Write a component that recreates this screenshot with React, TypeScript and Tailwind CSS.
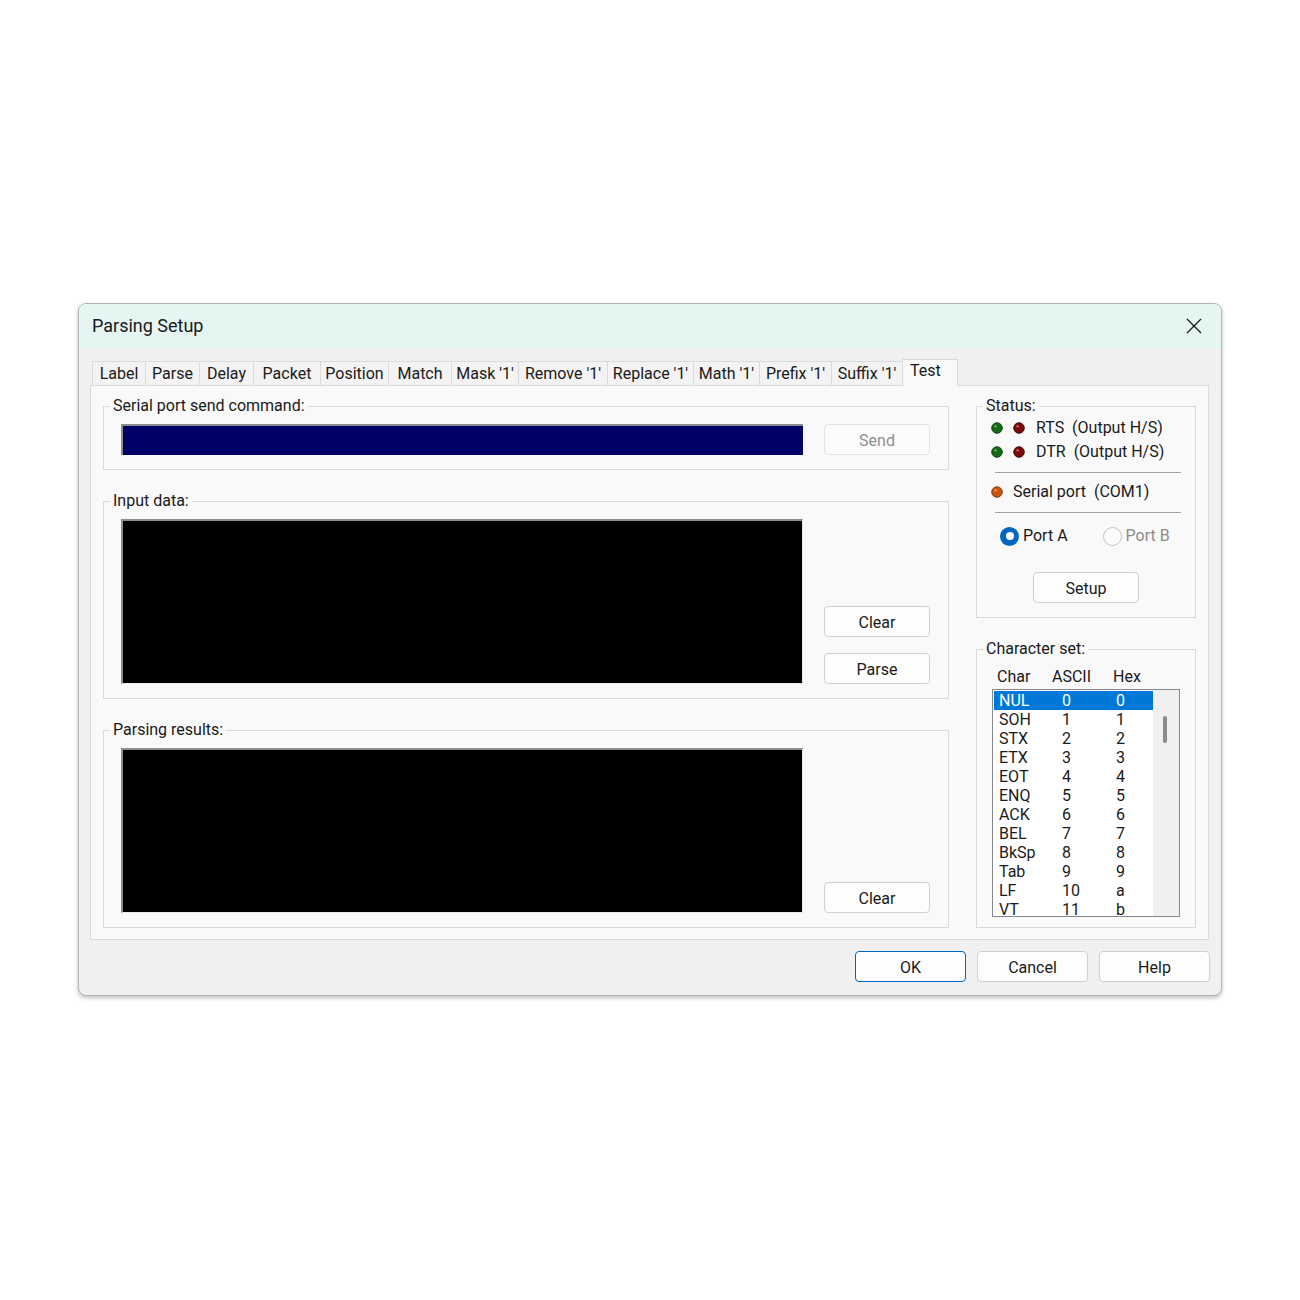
import React from 'react';

const font = { fontFamily: 'Roboto, "Noto Sans", "Liberation Sans", sans-serif' };

const tabs: [string, string][] = [
  ['Label', 'w-[53px]'],
  ['Parse', 'w-[54px]'],
  ['Delay', 'w-[54px]'],
  ['Packet', 'w-[67px]'],
  ['Position', 'w-[68px]'],
  ['Match', 'w-[63px]'],
  ["Mask '1'", 'w-[67px]'],
  ["Remove '1'", 'w-[89px]'],
  ["Replace '1'", 'w-[86px]'],
  ["Math '1'", 'w-[66px]'],
  ["Prefix '1'", 'w-[72px]'],
  ["Suffix '1'", 'w-[71px]'],
];

const chars: [string, string, string][] = [
  ['NUL', '0', '0'],
  ['SOH', '1', '1'],
  ['STX', '2', '2'],
  ['ETX', '3', '3'],
  ['EOT', '4', '4'],
  ['ENQ', '5', '5'],
  ['ACK', '6', '6'],
  ['BEL', '7', '7'],
  ['BkSp', '8', '8'],
  ['Tab', '9', '9'],
  ['LF', '10', 'a'],
  ['VT', '11', 'b'],
];

function Led({ color }: { color: 'green' | 'red' | 'orange' }) {
  const fill = color === 'green' ? '#146b14' : color === 'red' ? '#7d0a0a' : '#c8560e';
  const edge = color === 'green' ? '#0a3d0a' : color === 'red' ? '#470404' : '#7a3306';
  return (
    <svg width="12" height="12" viewBox="0 0 12 12" className="shrink-0">
      <circle cx="6" cy="6" r="5.3" fill={fill} stroke={edge} strokeWidth="0.9" />
      <ellipse cx="4.6" cy="4.3" rx="1.4" ry="1.1" fill="#ffffff" opacity="0.45" />
    </svg>
  );
}

function Button({ label, className = '', disabled = false, primary = false }: { label: string; className?: string; disabled?: boolean; primary?: boolean }) {
  return (
    <div
      className={`h-[31px] w-[106px] pt-[2px] rounded-[4px] border flex items-center justify-center text-[16px] ${
        primary ? 'border-[#0067c0] bg-[#fdfdfd] text-[#1a1a1a]' : disabled ? 'border-[#e3e3e3] bg-[#fbfbfb] text-[#8f8f8f]' : 'border-[#d0d0d0] bg-[#fdfdfd] text-[#1a1a1a]'
      } ${className}`}
    >
      {label}
    </div>
  );
}

function Group({ title, className = '', children }: { title: string; className?: string; children: React.ReactNode }) {
  return (
    <fieldset className="border border-[#dadada]">
      <legend className="ml-[6px] px-[3px] text-[16px] leading-[20px] text-[#1a1a1a]">{title}</legend>
      <div className={className}>{children}</div>
    </fieldset>
  );
}

function Sunken({ className }: { className: string }) {
  return <div className={`border-t-2 border-l-2 border-t-[#8c8c8c] border-l-[#8c8c8c] border-b border-r border-b-[#e8e8e8] border-r-[#e8e8e8] ${className}`} />;
}

export default function App() {
  return (
    <div className="min-h-screen bg-white pt-[303px] pl-[78px]" style={font}>
      <div className="w-[1144px] h-[693px] rounded-[8px] border border-[#b4b4b4] bg-[#f0f0f0] shadow-[0_2px_4px_rgba(0,0,0,0.25)] overflow-hidden flex flex-col">
        {/* title bar */}
        <div className="h-[44px] shrink-0 bg-[#e5f6f2] flex items-center justify-between pl-[13px] pr-[18px]">
          <span className="text-[18px] text-[#1a1a1a] mt-[-2px]">Parsing Setup</span>
          <svg width="18" height="18" viewBox="0 0 18 18">
            <path d="M2 2 L16 16 M16 2 L2 16" stroke="#1a1a1a" strokeWidth="1.3" />
          </svg>
        </div>

        {/* body */}
        <div className="flex-1 px-[11px] pt-[10px]">
          {/* tab strip */}
          <div className="flex items-end h-[27px] pl-[2px]">
            {tabs.map(([t, w]) => (
              <div key={t} className={`${w} h-[24px] border-t border-l border-[#dadada] bg-[#f3f3f3] flex items-center justify-center text-[16px] text-[#1a1a1a] whitespace-nowrap`}>
                {t}
              </div>
            ))}
            <div className="w-[56px] h-[27px] border-t border-l border-r border-[#dadada] bg-[#f9f9f9] relative z-10 mb-[-1px] pb-[4px] pl-[7px] flex items-center text-[16px] text-[#1a1a1a]">
              Test
            </div>
          </div>

          {/* tab page */}
          <div className="w-[1119px] h-[555px] border border-[#dadada] bg-[#f9f9f9] pt-[10px] pl-[12px] flex gap-[28px]">
            {/* left column */}
            <div className="w-[845px] flex flex-col gap-[21px]">
              <Group title="Serial port send command:" className="pl-[17px] pr-[18px] pt-[8px] pb-[14px]">
                <div className="flex items-center gap-[21px]">
                  <div className="w-[682px] h-[31px] bg-[#000066] border-t-2 border-l-2 border-t-[#8c8c8c] border-l-[#8c8c8c]" />
                  <Button label="Send" disabled />
                </div>
              </Group>
              <Group title="Input data:" className="pl-[17px] pr-[18px] pt-[8px] pb-[14px]">
                <div className="flex items-end gap-[21px]">
                  <Sunken className="w-[682px] h-[165px] bg-black" />
                  <div className="flex flex-col gap-[16px]">
                    <Button label="Clear" />
                    <Button label="Parse" />
                  </div>
                </div>
              </Group>
              <Group title="Parsing results:" className="pl-[17px] pr-[18px] pt-[8px] pb-[14px]">
                <div className="flex items-end gap-[21px]">
                  <Sunken className="w-[682px] h-[165px] bg-black" />
                  <Button label="Clear" />
                </div>
              </Group>
            </div>

            {/* right column */}
            <div className="w-[220px] flex flex-col gap-[21px]">
              <Group title="Status:" className="pb-[14px] text-[16px] text-[#1a1a1a]">
                <div className="pl-[14px] pr-[14px]">
                  <div className="h-[24px] flex items-center gap-[10px]">
                    <Led color="green" />
                    <Led color="red" />
                    <span className="ml-[1px] whitespace-pre">RTS  (Output H/S)</span>
                  </div>
                  <div className="h-[24px] flex items-center gap-[10px]">
                    <Led color="green" />
                    <Led color="red" />
                    <span className="ml-[1px] whitespace-pre">DTR  (Output H/S)</span>
                  </div>
                  <div className="mt-[8px] ml-[4px] border-t border-[#a0a0a0]" />
                  <div className="mt-[9px] h-[20px] flex items-center gap-[10px]">
                    <Led color="orange" />
                    <span className="whitespace-pre">Serial port  (COM1)</span>
                  </div>
                  <div className="mt-[10px] ml-[4px] border-t border-[#a0a0a0]" />
                  <div className="mt-[11px] h-[24px] flex items-center pl-[9px]">
                    <div className="w-[19px] h-[19px] rounded-full bg-[#0067c0] flex items-center justify-center">
                      <div className="w-[8px] h-[8px] rounded-full bg-white" />
                    </div>
                    <span className="ml-[4px]">Port A</span>
                    <div className="ml-[35px] w-[19px] h-[19px] rounded-full border border-[#c4c4c4] bg-[#fbfbfb]" />
                    <span className="ml-[4px] text-[#8c8c8c]">Port B</span>
                  </div>
                </div>
                <div className="mt-[24px] flex justify-center">
                  <Button label="Setup" />
                </div>
              </Group>

              <Group title="Character set:" className="pl-[15px] pr-[15px] pb-[10px] text-[16px] text-[#1a1a1a]">
                <div className="mt-[8px] h-[20px] flex items-center">
                  <span className="ml-[5px] w-[55px]">Char</span>
                  <span className="w-[61px]">ASCII</span>
                  <span>Hex</span>
                </div>
                <div className="mt-[2px] h-[228px] border border-[#828790] bg-white flex overflow-hidden">
                  <div className="flex-1 pt-[1px] pl-[1px]">
                    {chars.map(([c, a, h], i) => (
                      <div
                        key={c}
                        className={`h-[19px] flex items-center leading-[19px] ${i === 0 ? 'bg-[#0078d7] text-white' : 'text-[#1a1a1a]'}`}
                      >
                        <span className="pl-[5px] w-[68px]">{c}</span>
                        <span className="w-[54px]">{a}</span>
                        <span>{h}</span>
                      </div>
                    ))}
                  </div>
                  <div className="w-[26px] bg-[#f0f0f0] pt-[26px] flex justify-center">
                    <div className="ml-[-2px] w-[4px] h-[27px] rounded-full bg-[#8a8a8a]" />
                  </div>
                </div>
              </Group>
            </div>
          </div>

          {/* dialog buttons */}
          <div className="mt-[11px] flex justify-end gap-[11px]">
            <Button label="OK" primary className="w-[111px]" />
            <Button label="Cancel" className="w-[111px]" />
            <Button label="Help" className="w-[111px]" />
          </div>
        </div>
      </div>
    </div>
  );
}
